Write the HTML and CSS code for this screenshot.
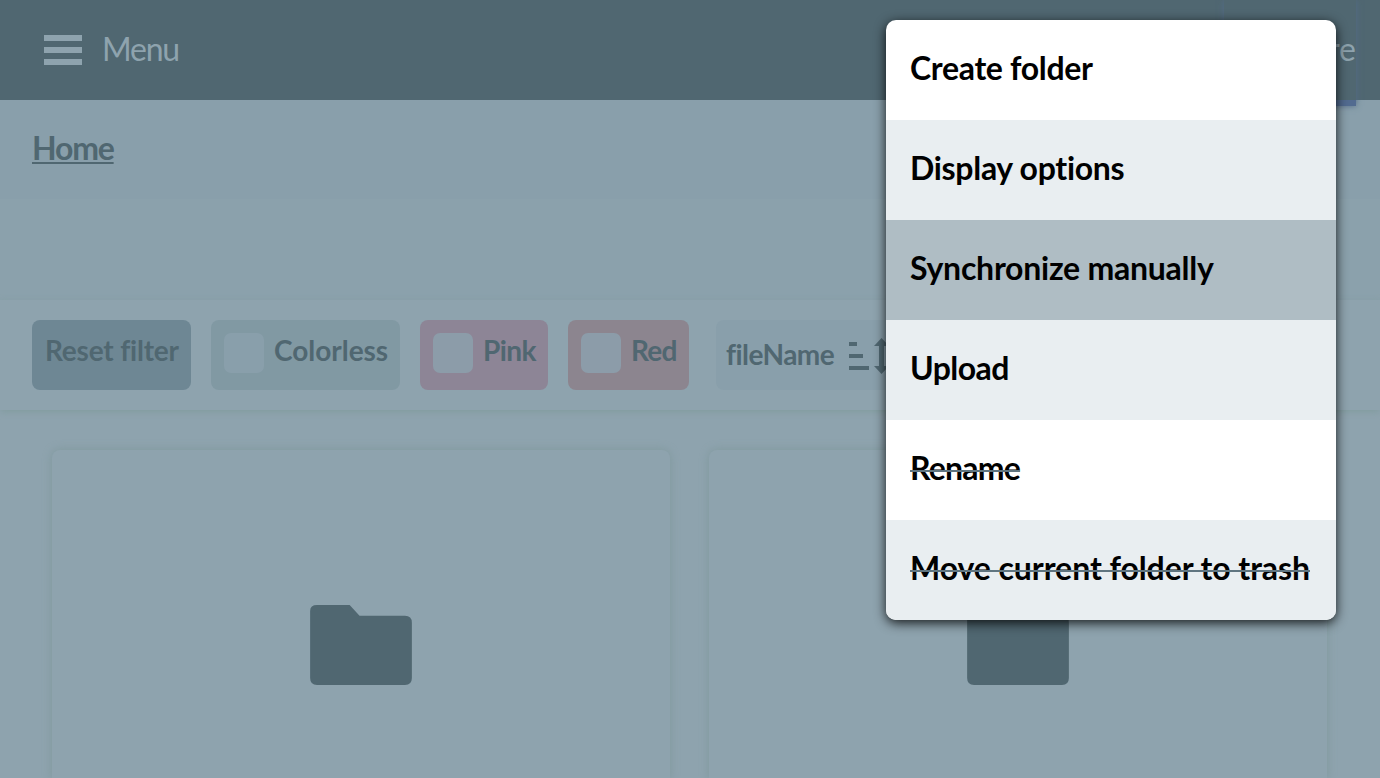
FILE: index.html
```html
<!DOCTYPE html>
<html lang="en">
<head>
<meta charset="utf-8">
<title>Files</title>
<link rel="stylesheet" href="styles.css">
</head>
<body>
<header class="topbar">
  <button class="menu-button">
    <svg width="38" height="30" viewBox="0 0 38 30"><path d="M0 0h38v6H0zM0 12h38v6H0zM0 24h38v6H0z" fill="#8ea3ae"/></svg>
    <span class="menu-label">Menu</span>
  </button>
  <button class="more-button">More</button>
</header>
<nav class="breadcrumb"><a class="home" href="#">Home</a></nav>
<div class="actions"></div>
<section class="filters">
  <button class="chip reset"><span class="t-reset">Reset filter</span></button>
  <label class="chip colorless"><span class="box"></span><span class="t-colorless">Colorless</span></label>
  <label class="chip pink"><span class="box"></span><span class="t-pink">Pink</span></label>
  <label class="chip red"><span class="box"></span><span class="t-red">Red</span></label>
  <button class="chip sort"><span class="t-sort">fileName</span>
    <svg width="41" height="36" viewBox="0 0 41 36" fill="#506771"><path d="M0 4h8v4H0zM0 16h14v4H0zM0 28h20v4H0zM25 8l7.500-8 7.500 8h-5v20h5l-7.500 8-7.500-8h5V8z"/></svg>
  </button>
</section>
<main class="grid">
  <article class="card"><svg class="folder" width="102" height="80" viewBox="0 0 103 81"><path d="M7 0H40L50 11H96Q103 11 103 18V74Q103 81 96 81H7Q0 81 0 74V6Q0 0 7 0Z" fill="#506771"/></svg></article>
  <article class="card"><svg class="folder" width="102" height="80" viewBox="0 0 103 81"><path d="M7 0H40L50 11H96Q103 11 103 18V74Q103 81 96 81H7Q0 81 0 74V6Q0 0 7 0Z" fill="#506771"/></svg></article>
</main>
<ul class="popup">
  <li class="item"><span class="t-create">Create folder</span></li>
  <li class="item"><span class="t-display">Display options</span></li>
  <li class="item active"><span class="t-sync">Synchronize manually</span></li>
  <li class="item"><span class="t-upload">Upload</span></li>
  <li class="item"><span class="t-rename disabled">Rename</span></li>
  <li class="item"><span class="t-move disabled">Move current folder to trash</span></li>
</ul>
</body>
</html>
```
FILE: styles.css
```css
* { box-sizing: border-box; }
body {
  margin: 0;
  height: 778px;
  overflow: hidden;
  display: flex;
  flex-direction: column;
  position: relative;
  background: #8ea3ae;
  color: #506771;
  font-family: Lato, "Noto Sans", sans-serif;
  font-size: 32px;
  font-weight: 700;
  font-variant-ligatures: none;
}
button { border: 0; margin: 0; padding: 0; background: none; color: inherit; font: inherit; font-variant-ligatures: none; }
.topbar {
  flex: none;
  height: 100px;
  padding: 0 24px 0 44px;
  display: flex;
  justify-content: space-between;
  align-items: flex-start;
  background: #506771;
  color: #8ea3ae;
}
.menu-button { display: flex; align-items: center; gap: 20px; height: 100px; }
.menu-label { font-weight: 400; line-height: 40px; padding-bottom: 3px; letter-spacing: -1.2px; }
.more-button {
  width: 132px;
  height: 106px;
  padding-bottom: 4px;
  text-align: right;
  font-weight: 400;
  border-bottom: 6px solid #526b90;
  box-shadow: 0 0 6px #526b88;
  background: #506771;
  z-index: 1;
}
.breadcrumb { flex: none; height: 99px; padding: 28px 32px; line-height: 40px; background: #899fab; }
.home { color: inherit; letter-spacing: -1.2px; text-decoration: underline; text-decoration-thickness: 2px; text-underline-offset: 2px; text-decoration-skip-ink: none; }
.actions { flex: none; height: 101px; background: #8ba1ac; }
.filters {
  flex: none;
  height: 110px;
  padding: 20px 32px;
  display: flex;
  gap: 20px;
  font-size: 28px;
  box-shadow: 0 2px 7px #829c9f;
}
.chip { flex: none; height: 70px; border-radius: 8px; display: flex; padding: 13px; gap: 10px; line-height: 34px; white-space: nowrap; }
.box { flex: none; width: 40px; height: 40px; border-radius: 7px; background: #8ea3ae; }
.reset { width: 159px; background: #6e8794; }
.colorless { width: 189px; background: #8199a3; }
.colorless .box { background: #899fab; }
.pink { width: 128px; background: #8d8596; }
.pink .box, .red .box { background: #8c9ca9; }
.red { width: 121px; background: #8c858f; }
.sort { width: 220px; margin-left: 7px; padding: 18px 10px; gap: 15px; background: #899fab; }
.t-reset { letter-spacing: -.2px; }
.t-colorless { letter-spacing: -.02px; }
.t-pink { letter-spacing: -.6px; }
.t-red { letter-spacing: -.7px; }
.t-sort { letter-spacing: -.55px; line-height: 32px; }
.grid { flex: 1; min-height: 0; display: grid; grid-template-columns: 618px 618px; gap: 39px; padding: 40px 52px 0; }
.card { border-radius: 8px 8px 0 0; background: #8ea3ae; box-shadow: 0 0 9px 1px #829a9f; display: flex; justify-content: center; padding-top: 155px; }
.popup {
  position: absolute;
  left: 886px;
  top: 20px;
  width: 450px;
  margin: 0;
  padding: 0;
  list-style: none;
  border-radius: 10px;
  overflow: hidden;
  color: #000;
  background: #fff;
  z-index: 2;
  box-shadow: 0 3px 12px rgba(0, 0, 0, .85);
}
.item { height: 100px; padding: 28px 24px; line-height: 40px; white-space: nowrap; }
.item:nth-child(even) { background: #e9eef1; }
.item.active { background: #afbdc4; }
.t-create { letter-spacing: -.33px; }
.t-display { letter-spacing: -.3px; }
.t-sync { letter-spacing: -.25px; }
.t-upload { letter-spacing: -.55px; }
.t-rename { letter-spacing: -.8px; }
.t-move { letter-spacing: -.07px; }
.disabled { position: relative; }
.disabled::after { content: ""; position: absolute; left: 0; right: 0; top: 22px; height: 2px; background: #607580; }
```
